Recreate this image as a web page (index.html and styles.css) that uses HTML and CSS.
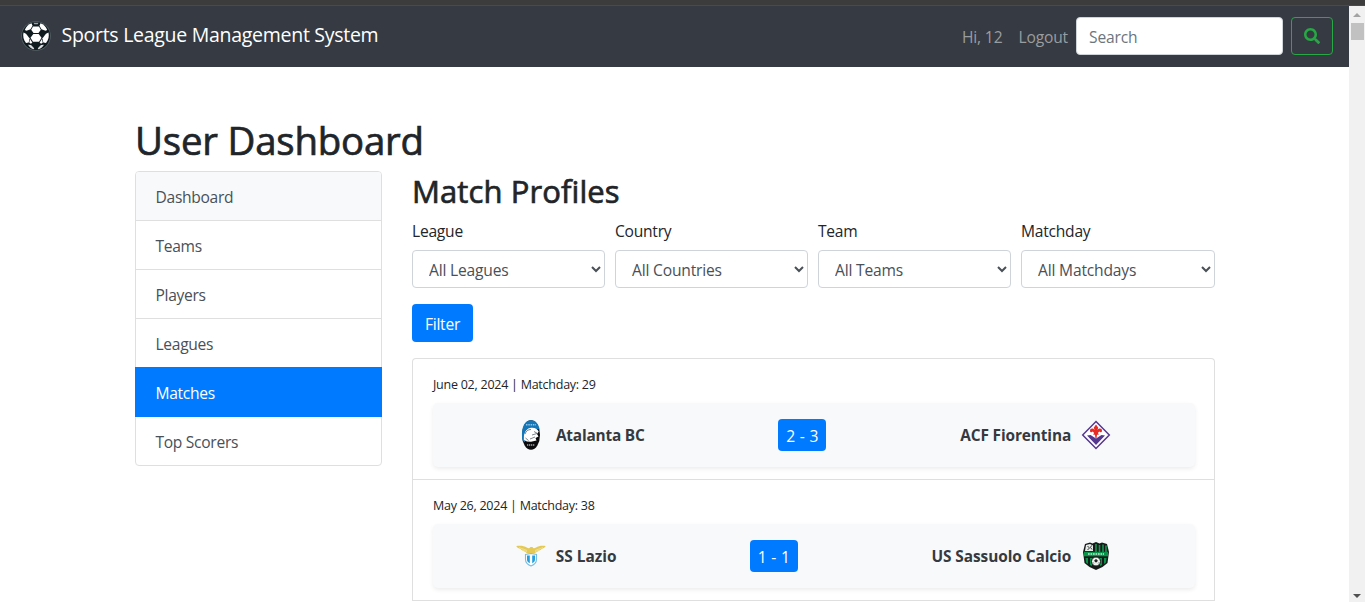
FILE: index.html
```html
<!DOCTYPE html>
<html lang="en">
<head>
<meta charset="utf-8">
<title>Sports League Management System</title>
<link rel="stylesheet" href="styles.css">
</head>
<body>
<div class="topstrip"></div>
<div class="viewport">
  <div class="page">
    <nav class="navbar">
      <a class="brand">
        <svg class="ball" width="30" height="30" viewBox="0 0 30 30">
          <circle cx="15" cy="15" r="14.800" fill="#536165"/>
          <circle cx="15" cy="15" r="14" fill="#101b20"/>
          <g fill="#fff">
            <path d="M12 5.500h6l1.800 3.300L17.500 12h-5l-2.300-3.200z"/>
            <path d="M12.300 13h5.400l2.800 3.800-2.500 4h-6l-2.500-4z"/>
            <path d="M10.500 2.200l1 2.500-2 3.500-4 1.600-1.700-.8C5 5.800 7.500 3.300 10.500 2.200z"/>
            <path d="M19.500 2.200l-1 2.500 2 3.500 4 1.600 1.700-.8C25 5.800 22.500 3.300 19.500 2.200z"/>
            <path d="M2.500 11.500l2.500 1.300 3.500 4.500-.8 4.200-2.700.5C2.500 19 1.700 15 2.500 11.500z"/>
            <path d="M27.500 11.500L25 12.800l-3.500 4.500.8 4.200 2.700.5C27.500 19 28.300 15 27.500 11.500z"/>
            <path d="M9 18l2.300 3.600-1.300 1.200-1.700-1z"/>
            <path d="M21 18l-2.300 3.600 1.300 1.200 1.700-1z"/>
            <path d="M7 23.700l3 .3 3.200 3.200-.5 1C10.500 27.700 8.300 26 7 23.700z" opacity=".85"/>
            <path d="M23 23.700l-3 .3-3.200 3.200.5 1c2.200-.5 4.400-2.200 5.700-4.500z" opacity=".85"/>
            <path d="M12.500 1.700h5l-.8 1.600h-3.400z" opacity=".6"/>
          </g>
        </svg>
        <span>Sports League Management System</span>
      </a>
      <div class="nav-right">
        <span class="hello">Hi, 12</span>
        <a class="logout">Logout</a>
        <input class="search" type="text" placeholder="Search">
        <button class="search-btn">
          <svg width="16" height="16" viewBox="0 0 512 512"><path fill="#28a745" d="M505 442.700L405.300 343c-4.500-4.500-10.600-7-17-7H372c27.600-35.300 44-79.700 44-128C416 93.100 322.900 0 208 0S0 93.100 0 208s93.100 208 208 208c48.300 0 92.700-16.400 128-44v16.300c0 6.400 2.500 12.500 7 17l99.700 99.700c9.400 9.400 24.600 9.400 33.900 0l28.300-28.300c9.400-9.400 9.400-24.600.1-34zM208 336c-70.700 0-128-57.200-128-128 0-70.700 57.200-128 128-128 70.700 0 128 57.200 128 128 0 70.700-57.200 128-128 128z"/></svg>
        </button>
      </div>
    </nav>
    <main class="container">
      <h1>User Dashboard</h1>
      <div class="columns">
        <aside class="menu">
          <a class="menu-item head">Dashboard</a>
          <a class="menu-item">Teams</a>
          <a class="menu-item">Players</a>
          <a class="menu-item">Leagues</a>
          <a class="menu-item active">Matches</a>
          <a class="menu-item">Top Scorers</a>
        </aside>
        <section class="content">
          <h2>Match Profiles</h2>
          <div class="filters">
            <div class="field"><label>League</label><select><option>All Leagues</option></select></div>
            <div class="field"><label>Country</label><select><option>All Countries</option></select></div>
            <div class="field"><label>Team</label><select><option>All Teams</option></select></div>
            <div class="field"><label>Matchday</label><select><option>All Matchdays</option></select></div>
          </div>
          <button class="filter-btn">Filter</button>
          <div class="matches">
            <article class="match">
              <p class="meta">June 02, 2024 | Matchday: 29</p>
              <div class="game">
                <div class="team">
                  <svg width="30" height="30" viewBox="0 0 30 30">
                    <ellipse cx="15" cy="15" rx="9" ry="14.800" fill="#0b0b0d"/>
                    <path d="M6 17C5.500 6 9 .2 15 .2c4.500 0 7.600 3.400 8.600 9L15 9l-5 5-1 8c-1.500 0-2.800-2-3-5z" fill="#1677b8"/>
                    <path d="M10 4.800h10" stroke="#8cc3e6" stroke-width="1.500" stroke-dasharray="1.500 .8"/>
                    <path d="M8 20c-1.500-5 .5-11 6-12 4-.8 7.500.7 8.700 3.500L21 14l1.500 2.500-3 1.500 1 2.500-5.500 1.300-4-.3z" fill="#fff"/>
                    <path d="M9 14c1-3 3-4.500 6-4.500M14 19l5-2M16 15l5-1.500M18 11.500l3.500 2M9.500 18l3 2.500" fill="none" stroke="#59636b" stroke-width=".8"/>
                    <path d="M7 19c0-5 1.500-9 5-11" fill="none" stroke="#1677b8" stroke-width="1.200"/>
                    <path d="M11 25h8" stroke="#a9a9ad" stroke-width="1.600" stroke-dasharray="1.300 .7"/>
                  </svg>
                  <b class="atalanta">Atalanta BC</b>
                </div>
                <span class="score">2 - 3</span>
                <div class="team">
                  <b>ACF Fiorentina</b>
                  <svg width="30" height="30" viewBox="0 0 30 30">
                    <path d="M15 1.500L28.300 15 15 28.500 1.700 15z" fill="#fff" stroke="#56378f" stroke-width="1.500"/>
                    <path d="M6 15.500l3.500-.5 5.500 3.500 5.500-3.500 3.500.5-9 9.500z" fill="#56378f"/>
                    <path d="M15 4.500l2.300 3.200-1 2.300c2.200-2.500 4.700-1.500 4.700.8 0 1.700-2 2-2.600.8-.5.2-1 .7-1.400 1.300l.8 1.800H16l-.4 3.300h-1.200L14 14.700h-1.800l.8-1.800c-.4-.6-.9-1.100-1.400-1.300-.6 1.200-2.600.9-2.600-.8 0-2.300 2.500-3.300 4.700-.8l-1-2.300z" fill="#e72b25"/>
                  </svg>
                </div>
              </div>
            </article>
            <article class="match">
              <p class="meta">May 26, 2024 | Matchday: 38</p>
              <div class="game">
                <div class="team">
                  <svg width="30" height="30" viewBox="0 0 30 30">
                    <path d="M.3 5c4-.5 8-.2 10.500 1.500 1.500 1 2.500 1 3.700-.5h2c.8 1.700 2 1.500 3.500.5C22.500 4.800 26 4.500 29.700 5c-1 2-3 2.500-4 3-1 1.200-2.500 1.500-4 2.500-1.500.5-2 1.500-4.200 2h-5C10.500 12.500 10 11 8.500 10.500 7 10 5.500 9.200 4.500 8 3 7.500 1 6.800.3 5z" fill="#e5c957"/>
                    <path d="M3 6.500l8 3M27 6.500l-8 3M6 9l5 1.500M24 9l-5 1.500" stroke="#f4e6a0" stroke-width=".7"/>
                    <path d="M9.500 13.500l5.500-1 5.500 1v5c0 3-2 5-5.500 6.500-3.500-1.500-5.500-3.500-5.500-6.500z" fill="#fff" stroke="#78bcdf" stroke-width="1.100"/>
                    <path d="M11 14.500h2.800v7.700c-1.800-.8-2.800-2-2.800-3.700zM16.200 14.500H19v4c0 1.700-1 2.900-2.800 3.700z" fill="#249fdd"/>
                  </svg>
                  <b class="lazio">SS Lazio</b>
                </div>
                <span class="score">1 - 1</span>
                <div class="team">
                  <b class="sassuolo">US Sassuolo Calcio</b>
                  <svg width="30" height="30" viewBox="0 0 30 30">
                    <path d="M4 3l5-1.500 2.500 1L15 1l3.500 1.500 2.500-1L26 3l2 8-1.500 11-5 4L15 29l-6.500-3-5-4L2 11z" fill="#161b19"/>
                    <path d="M5 4l4-1 3 1.500V10H4z" fill="#e7ebe9"/>
                    <path d="M6.500 5l2 2-2 2M10.500 4.500l-1 2 1.500 2" fill="none" stroke="#353b38"/>
                    <path d="M15 3v8M18.500 4v7M22 3.500V11M25 4.500V11" stroke="#149653" stroke-width="1.600"/>
                    <path d="M3 10.800h24v4.500H3z" fill="#079348"/>
                    <path d="M7 13h16" stroke="#c9ecd8" stroke-width="1.700" stroke-dasharray="1.700 .8"/>
                    <path d="M4.500 17h2.500v6l-2-1.500zM23 17h2.500l-.5 4.500-2 1.500zM9 17h2v8l-2-1zM19 17h2v7l-2 1z" fill="#079348"/>
                    <circle cx="15" cy="20.500" r="4.500" fill="#edf2ef" stroke="#161b19"/>
                    <path d="M13.500 19.300l1.500-1 1.500 1-.6 1.800h-1.800zM11.800 21l1.200 1.700M18.200 21L17 22.700" fill="#222" stroke="#222" stroke-width=".4"/>
                  </svg>
                </div>
              </div>
            </article>
          </div>
        </section>
      </div>
    </main>
  </div>
  <div class="scrollbar">
    <svg width="16" height="17" viewBox="0 0 16 17"><path d="M4 11l4-4 4 4z" fill="#a3a3a3"/></svg>
    <span class="thumb"></span>
    <svg width="16" height="17" viewBox="0 0 16 17" class="down"><path d="M4 9l4 4 4-4z" fill="#505050"/></svg>
  </div>
</div>
</body>
</html>
```
FILE: styles.css
```css
* { box-sizing: border-box; }
body {
  margin: 0; width: 1365px; height: 602px; overflow: hidden;
  background: #fff; color: #212529;
  font: 15.6px/24px "Open Sans", "Noto Sans", sans-serif;
  letter-spacing: -.24px;
}
svg { display: block; flex: none; }
.topstrip { height: 6px; background: #3c3c3c; border-bottom: 1px solid #484a4b; }
.viewport { display: flex; height: 596px; }
.page { width: 1349px; overflow: hidden; }
.navbar {
  height: 61px; padding: 0 16px 2px 21px; display: flex;
  align-items: center; justify-content: space-between; background: #363a42;
}
.brand {
  display: flex; align-items: center; gap: 10.5px; color: #fff;
  font-size: 19.5px; line-height: 28px; letter-spacing: -.28px;
}
.brand span { padding-bottom: 1px; }
.nav-right { display: flex; align-items: center; color: #9a9da0; letter-spacing: -.15px; }
.hello { margin-right: 16px; padding-top: 3px; }
.logout { margin-right: 8px; padding-top: 3px; }
.search {
  width: 207px; height: 38px; margin: 0 8px 0 0; padding: 7px 12px 5px;
  border: 1px solid #ced4da; border-radius: 4px; background: #fff;
  font: inherit; letter-spacing: inherit; color: #495057;
}
.search::placeholder { color: #6c757d; opacity: 1; }
.search-btn {
  width: 42px; height: 38px; padding: 0; display: flex;
  align-items: center; justify-content: center;
  border: 1px solid #28a745; border-radius: 4px; background: transparent;
}
.container { width: 1080px; margin: 49px 0 0 135px; }
h1, h2 { margin: 0; font-weight: 400; -webkit-text-stroke: .7px #212529; }
h1 { font-size: 38.4px; line-height: 48px; margin-bottom: 7px; letter-spacing: -.2px; }
h2 { font-size: 31px; line-height: 38px; margin: 1px 0 8px; letter-spacing: .1px; }
.columns { display: flex; gap: 30px; align-items: flex-start; }
.menu {
  width: 247px; flex: none; display: flex; flex-direction: column;
  border: 1px solid #dfdfdf; border-radius: 4px;
}
.menu-item {
  height: 49px; padding: 13px 19.5px 11px; color: #495057;
  border-bottom: 1px solid #dfdfdf; letter-spacing: -.3px;
}
.menu-item:last-child { border-bottom: 0; height: 48px; }
.menu-item.head { background: #f8f9fa; border-radius: 3px 3px 0 0; }
.menu-item.active {
  margin: -1px -1px 0; padding: 14px 20.5px 11px; height: 50px;
  background: #007bff; border-color: #007bff; color: #fff;
}
.content { width: 803px; }
.filters { display: grid; grid-template-columns: 193px 193px 193px 194px; gap: 10px; }
.field { display: flex; flex-direction: column; gap: 7px; }
.field label { padding-top: 1px; }
select {
  width: 100%; height: 38px; padding: 7px 11px 5px 12px; font: inherit;
  letter-spacing: -.18px; color: #495057;
  background: #fff; border: 1px solid #ced4da; border-radius: 4px;
}
.filter-btn {
  display: block; width: 61px; height: 38px; margin: 16px 0; padding: 1px 0 0;
  border: 0; border-radius: 4px; background: #007bff; color: #fff;
  font: inherit; letter-spacing: inherit;
}
.matches { border: 1px solid #dfdfdf; border-radius: 4px 4px 0 0; border-bottom: 0; }
.match { height: 121px; padding: 13px 19px 11px 20px; border-bottom: 1px solid #dfdfdf; }
.meta { margin: 0 0 6px; font-size: 12.5px; line-height: 25px; letter-spacing: -.25px; }
.game {
  height: 64px; padding: 0 17px 0 16px; display: flex; align-items: center;
  justify-content: space-around; background: #f8f9fa; border-radius: 5px;
  box-shadow: 0 2px 4px rgba(0, 0, 0, .075);
}
.team { display: flex; align-items: center; gap: 10px; color: #343a40; }
.team b { padding-top: 2px; font-size: 15.4px; font-weight: 700; letter-spacing: -.12px; }
.team .atalanta { letter-spacing: -.2px; }
.team .lazio { letter-spacing: 0; }
.team .sassuolo { letter-spacing: -.07px; }
.score {
  width: 48px; height: 32px; line-height: 34px; text-align: center;
  background: #007bff; color: #fff; border-radius: 4px; letter-spacing: .3px;
}
.scrollbar { width: 16px; display: flex; flex-direction: column; background: #f1f1f1; }
.thumb { width: 13px; height: 17px; margin-left: 2px; background: #c1c1c1; }
.down { margin-top: auto; }
```
